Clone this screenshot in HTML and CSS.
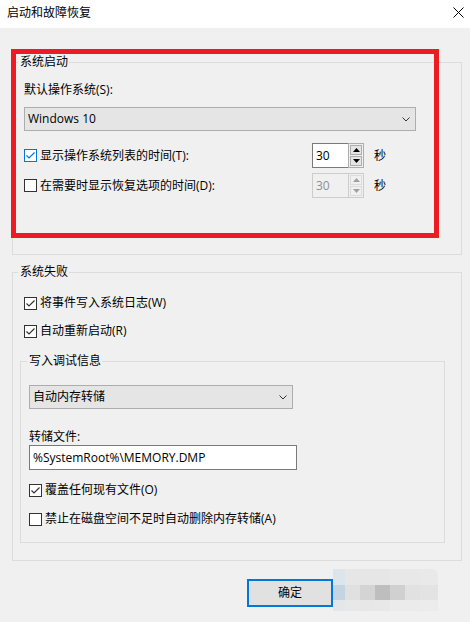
FILE: index.html
```html
<!DOCTYPE html>
<html lang="zh-CN">
<head>
<meta charset="utf-8">
<title>启动和故障恢复</title>
<link rel="stylesheet" href="styles.css">
</head>
<body>
<div class="window">
  <div class="titlebar">
    <span class="title">启动和故障恢复</span>
    <svg class="close" width="11" height="11" viewBox="0 0 11 11"><path d="M0.5 0.5 L10.5 10.5 M10.5 0.5 L0.5 10.5" stroke="#000" stroke-width="1" fill="none"/></svg>
  </div>

  <section class="group g-startup">
    <div class="legend lg-startup">系统启动</div>
    <div class="label-row">默认操作系统(S):</div>
    <div class="combo combo-os">
      <span class="combo-text">Windows 10</span>
      <svg class="chev" width="8" height="5" viewBox="0 0 8 5"><path d="M0.5 0.5 L4 4 L7.5 0.5" stroke="#333" stroke-width="1" fill="none"/></svg>
    </div>
    <div class="opt-row first-opt">
      <div class="check check-wide">
        <span class="box box-focus"><svg width="11" height="11" viewBox="0 0 11 11"><path d="M1.5 5.5 L4 8 L9.5 2.5" stroke="#0078d7" stroke-width="1.2" fill="none"/></svg></span>
        <span class="check-label">显示操作系统列表的时间(T):</span>
      </div>
      <div class="spin">
        <div class="spin-input">30</div>
        <div class="spin-btns">
          <div class="spin-btn"><svg width="7" height="4" viewBox="0 0 7 4"><path d="M0 4 L3.5 0 L7 4 Z" fill="#000"/></svg></div>
          <div class="spin-btn"><svg width="7" height="4" viewBox="0 0 7 4"><path d="M0 0 L3.5 4 L7 0 Z" fill="#000"/></svg></div>
        </div>
      </div>
      <span class="unit">秒</span>
    </div>
    <div class="opt-row second-opt">
      <div class="check check-wide">
        <span class="box"></span>
        <span class="check-label">在需要时显示恢复选项的时间(D):</span>
      </div>
      <div class="spin spin-disabled">
        <div class="spin-input">30</div>
        <div class="spin-btns">
          <div class="spin-btn"><svg width="7" height="4" viewBox="0 0 7 4"><path d="M0 4 L3.5 0 L7 4 Z" fill="#a0a0a0"/></svg></div>
          <div class="spin-btn"><svg width="7" height="4" viewBox="0 0 7 4"><path d="M0 0 L3.5 4 L7 0 Z" fill="#a0a0a0"/></svg></div>
        </div>
      </div>
      <span class="unit">秒</span>
    </div>
  </section>

  <section class="group g-failure">
    <div class="legend lg-failure">系统失败</div>
    <div class="check check-row cr-first">
      <span class="box"><svg width="11" height="11" viewBox="0 0 11 11"><path d="M1.5 5.5 L4 8 L9.5 2.5" stroke="#333" stroke-width="1.2" fill="none"/></svg></span>
      <span class="check-label">将事件写入系统日志(W)</span>
    </div>
    <div class="check check-row cr-second">
      <span class="box"><svg width="11" height="11" viewBox="0 0 11 11"><path d="M1.5 5.5 L4 8 L9.5 2.5" stroke="#333" stroke-width="1.2" fill="none"/></svg></span>
      <span class="check-label">自动重新启动(R)</span>
    </div>

    <section class="group g-debug">
      <div class="legend lg-debug">写入调试信息</div>
      <div class="combo combo-dump">
        <span class="combo-text">自动内存转储</span>
        <svg class="chev" width="8" height="5" viewBox="0 0 8 5"><path d="M0.5 0.5 L4 4 L7.5 0.5" stroke="#333" stroke-width="1" fill="none"/></svg>
      </div>
      <div class="label-row file-label">转储文件:</div>
      <div class="textbox">%SystemRoot%\MEMORY.DMP</div>
      <div class="check dcheck dc-first">
        <span class="box"><svg width="11" height="11" viewBox="0 0 11 11"><path d="M1.5 5.5 L4 8 L9.5 2.5" stroke="#333" stroke-width="1.2" fill="none"/></svg></span>
        <span class="check-label">覆盖任何现有文件(O)</span>
      </div>
      <div class="check dcheck dc-second">
        <span class="box"></span>
        <span class="check-label">禁止在磁盘空间不足时自动删除内存转储(A)</span>
      </div>
    </section>
  </section>

  <div class="footer">
    <button class="btn-ok" type="button">确定</button>
    <div class="mosaic">
      <span></span><span></span><span></span><span></span><span></span><span></span><span></span>
      <span></span><span></span><span></span><span></span><span></span><span></span><span></span>
      <span></span><span></span><span></span><span></span><span></span><span></span><span></span>
    </div>
  </div>

  <div class="annot"></div>
</div>
</body>
</html>
```

FILE: styles.css
```css
* { box-sizing: border-box; }
html, body { margin: 0; padding: 0; }
body {
  width: 470px;
  height: 622px;
  overflow: hidden;
  background: #f0f0f0;
  color: #000;
  font-family: "Open Sans", "Noto Sans CJK SC", sans-serif;
  font-size: 12px;
  line-height: 16px;
}
.window { position: relative; height: 622px; }

/* title bar */
.titlebar {
  height: 28px;
  background: #fff;
  display: flex;
  align-items: center;
  justify-content: space-between;
  padding: 0 6px 0 7px;
}
.title { margin-top: -3px; }
.close { display: block; margin-top: -4px; }

/* group boxes */
.group { border: 1px solid #dcdcdc; }
.legend {
  height: 14px;
  line-height: 14px;
  margin-top: -8px;
  padding: 0 1px 0 2px;
  background: #f0f0f0;
  width: max-content;
}
.g-startup { margin: 34px 0 0 12px; width: 450px; padding: 0 0 56px 11px; }
.lg-startup { margin-left: -6px; }
.g-failure { margin: 17px 0 0 12px; width: 450px; padding: 0 0 17px 7px; }
.lg-failure { margin-left: -2px; }
.g-debug { margin-top: 22px; width: 425px; padding: 0 0 15px 8px; }
.lg-debug { margin-left: -2px; }

.label-row { height: 16px; margin-top: 13px; }

/* combo boxes */
.combo {
  height: 24px;
  background: #e5e5e5;
  border: 1px solid #adadad;
  display: flex;
  align-items: center;
  justify-content: space-between;
  padding: 0 5px 0 3px;
}
.combo-os { width: 392px; margin-top: 9px; }
.combo-dump { width: 264px; margin-top: 17px; }
.chev { display: block; }

/* checkboxes */
.check { display: flex; align-items: center; }
.box {
  width: 13px;
  height: 13px;
  border: 1px solid #333;
  background: #fff;
  display: flex;
  align-items: center;
  justify-content: center;
  margin-right: 3px;
  flex: none;
}
.box svg { display: block; }
.box-focus { border-color: #0078d7; }

.opt-row { display: flex; align-items: center; height: 25px; }
.first-opt { margin-top: 12px; }
.second-opt { margin-top: 5px; }
.check-wide { width: 288px; }

/* spin box */
.spin { display: flex; width: 52px; height: 25px; }
.spin-input {
  width: 36px;
  height: 25px;
  background: #fff;
  border: 1px solid #7a7a7a;
  border-right: none;
  padding-left: 3px;
  line-height: 23px;
}
.spin-btns {
  width: 16px;
  height: 25px;
  border: 1px solid #adadad;
  background: #f0f0f0;
  display: flex;
  flex-direction: column;
  padding: 1px;
  gap: 1px;
}
.spin-btn {
  flex: 1;
  background: #e5e5e5;
  border: 1px solid #adadad;
  display: flex;
  align-items: center;
  justify-content: center;
}
.spin-btn svg { display: block; }
.spin-disabled .spin-input { background: #f0f0f0; border-color: #cccccc; color: #8f8f8f; }
.spin-disabled .spin-btns { border-color: #cccccc; }
.spin-disabled .spin-btn { background: #f0f0f0; border-color: #dcdcdc; }
.unit { margin-left: 10px; }

/* failure group */
.check-row { height: 16px; margin-left: 4px; }
.cr-first { margin-top: 16px; }
.cr-second { margin-top: 12px; }

.file-label { margin-top: 20px; }
.textbox {
  width: 268px;
  height: 25px;
  background: #fff;
  border: 1px solid #7a7a7a;
  padding-left: 3px;
  line-height: 23px;
}
.dcheck { height: 16px; }
.dc-first { margin-top: 12px; }
.dc-second { margin-top: 13px; }

/* footer */
.footer {
  display: flex;
  align-items: flex-start;
  height: 42px;
  margin-top: 8px;
  padding-left: 247px;
}
.btn-ok {
  width: 86px;
  height: 28px;
  margin: 10px 0 0 0;
  border: 2px solid #0078d7;
  background: #e1e1e1;
  font: inherit;
  color: #000;
  padding: 0;
}
.mosaic {
  display: grid;
  grid-template-columns: 12px 15px 15px 15px 15px 15px 18px;
  grid-template-rows: 16px 15px 11px;
  border-top-right-radius: 6px;
  overflow: hidden;
}
.mosaic span:nth-child(1) { background: #dde5ec; }
.mosaic span:nth-child(2) { background: #e6e6e6; }
.mosaic span:nth-child(3) { background: #e6e6e6; }
.mosaic span:nth-child(4) { background: #e6e6e6; }
.mosaic span:nth-child(5) { background: #e8e8e8; }
.mosaic span:nth-child(6) { background: #e8e8e8; }
.mosaic span:nth-child(7) { background: #e9e9e9; }
.mosaic span:nth-child(8) { background: #c4d4e3; }
.mosaic span:nth-child(9) { background: #e0e0e0; }
.mosaic span:nth-child(10) { background: #d4d4d4; }
.mosaic span:nth-child(11) { background: #bebebe; }
.mosaic span:nth-child(12) { background: #d0d0d0; }
.mosaic span:nth-child(13) { background: #e1e1e1; }
.mosaic span:nth-child(14) { background: #e3e3e3; }
.mosaic span:nth-child(15) { background: #e4e7ea; }
.mosaic span:nth-child(16) { background: #e8e8e8; }
.mosaic span:nth-child(17) { background: #e7e7e7; }
.mosaic span:nth-child(18) { background: #e8e8e8; }
.mosaic span:nth-child(19) { background: #ebebeb; }
.mosaic span:nth-child(20) { background: #ebebeb; }
.mosaic span:nth-child(21) { background: #ececec; }

/* red annotation rectangle drawn over the dialog */
.annot {
  position: absolute;
  left: 11px;
  top: 49px;
  width: 428px;
  height: 189px;
  border: 5px solid #ed1c24;
  pointer-events: none;
}
```
